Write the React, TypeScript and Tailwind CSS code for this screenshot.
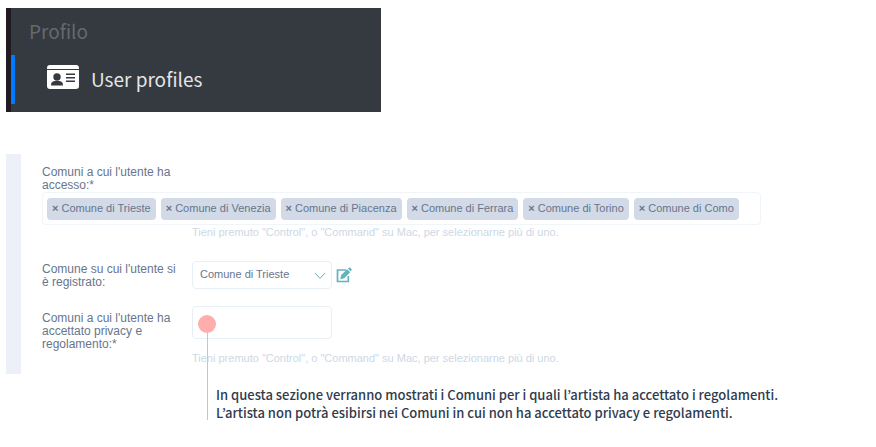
import { useState } from "react";

interface HintProps {
  className: string;
}

const cities = ["Trieste", "Venezia", "Piacenza", "Ferrara", "Torino", "Como"];

const ProfileIcon = () => (
  <svg viewBox="0 0 32 24" className="mb-[6px] h-6 w-8" aria-hidden="true">
    <path fill="#fff" d="M3 0h26a3 3 0 0 1 3 3v1H0V3a3 3 0 0 1 3-3ZM0 5h32v16a3 3 0 0 1-3 3H3a3 3 0 0 1-3-3Z" />
    <circle cx="10" cy="12" r="3.7" fill="#343a40" />
    <path fill="#343a40" d="M4 20c0-3 2-4 4-4h4c2 0 4 1 4 4v.5H4ZM19 8.5h9V10h-9ZM19 12h9v1.500h-9ZM19 15.500h9V17h-9Z" />
  </svg>
);

const EditIcon = () => (
  <svg viewBox="0 0 16 16" className="h-4 w-4" aria-hidden="true">
    <path fill="none" stroke="#63b3bd" strokeWidth="1.700" d="M10 3H1.500v11.500h10.800V9" />
    <path fill="#63b3bd" d="m4.200 12.300 1-4.300 6-5.700 3 3-6 5.900ZM12 1.700l1-1c.4-.4.900-.4 1.300 0l1.200 1.200c.4.400.4.900 0 1.300l-.9 1Z" />
  </svg>
);

const Hint = ({ className }: HintProps) => (
  <p className={`text-[11px] leading-[14px] text-[#cdd8e5] ${className}`}>
    Tieni premuto "Control", o "Command" su Mac, per selezionarne più di uno.
  </p>
);

const App = () => {
  const [selected, setSelected] = useState<string[]>(cities);
  const [city, setCity] = useState("Trieste");

  return (
    <main className="bg-white pt-2 pl-[6px] font-['Liberation_Sans',Arial,sans-serif]">
      {/* Sidebar menu */}
      <nav className="h-[104px] max-w-[375px] border-l-[5px] border-[#211a22] bg-[#343a40] font-['Noto_Sans_CJK_KR',sans-serif]">
        <h2 className="px-[18px] pt-[11px] pb-3 text-[19px] leading-6 text-[#66696c]">Profilo</h2>
        <a
          href="#profiles"
          className="flex h-[49px] items-center gap-3 border-l-4 border-[#007bff] pl-8 text-[19px] text-[#e4e5e6]"
        >
          <ProfileIcon />
          User profiles
        </a>
      </nav>

      {/* Profile form */}
      <form className="mt-[42px] border-l-[15px] border-[#ebf1f6] pt-3 pb-[9px] pl-[21px] text-[12px] leading-[13px] text-[#68758d]">
        <label htmlFor="access" className="block w-[142px]">
          Comuni a cui l'utente ha accesso:*
        </label>
        <div
          id="access"
          className="flex min-h-[33px] max-w-[719px] flex-wrap items-center gap-[5px] rounded border border-[#f0f5f9] px-1 text-[11px]"
        >
          {selected.map((name) => (
            <span key={name} className="flex h-[22px] items-center rounded bg-[#d1dae6] px-[5px]">
              <button
                type="button"
                aria-label={`Rimuovi ${name}`}
                onClick={() => setSelected(selected.filter((item) => item !== name))}
                className="mr-[3px] font-bold"
              >
                ×
              </button>
              Comune di {name}
            </span>
          ))}
        </div>
        <Hint className="ml-[150px]" />

        <div className="mt-[21px] grid grid-cols-[142px_1fr] gap-2">
          <label htmlFor="city" className="pt-[3px]">
            Comune su cui l'utente si è registrato:
          </label>
          <div className="flex items-center gap-1">
            <div className="relative w-[140px]">
              <select
                id="city"
                value={city}
                onChange={(event) => setCity(event.target.value)}
                className="h-7 w-full appearance-none rounded border border-[#e9f0f5] bg-white px-[7px] text-[11px]"
              >
                {cities.map((name) => (
                  <option key={name} value={name}>
                    Comune di {name}
                  </option>
                ))}
              </select>
              <svg viewBox="0 0 12 8" className="pointer-events-none absolute top-[11px] right-[6px] h-2 w-3" aria-hidden="true">
                <path fill="none" stroke="#63b3bd" d="m1 1 5 5.500L11 1" />
              </svg>
            </div>
            <button type="button" aria-label="Modifica comune">
              <EditIcon />
            </button>
          </div>
        </div>

        <div className="mt-[17px] grid grid-cols-[142px_1fr] gap-2">
          <label htmlFor="privacy" className="pt-[6px]">
            Comuni a cui l'utente ha accettato privacy e regolamento:*
          </label>
          <div className="relative">
            <input
              id="privacy"
              className="block h-[33px] w-[140px] rounded border border-[#e9f0f5] px-2"
            />
            <Hint className="mt-3" />
            {/* Callout marker */}
            <div className="pointer-events-none absolute top-[9px] left-[6px] flex flex-col items-center">
              <span className="h-[18px] w-[18px] rounded-full bg-[#ffadad]" />
              <span className="h-[87px] w-px bg-[#ffadad]" />
            </div>
          </div>
        </div>
      </form>

      {/* Callout text */}
      <p className="mt-3 ml-[210px] font-['Noto_Sans_CJK_KR',sans-serif] text-[13px] leading-[18px] font-medium text-[#303b4e]">
        In questa sezione verranno mostrati i Comuni per i quali l’artista ha accettato i regolamenti.
        <br />
        L’artista non potrà esibirsi nei Comuni in cui non ha accettato privacy e regolamenti.
      </p>
    </main>
  );
};

export default App;
